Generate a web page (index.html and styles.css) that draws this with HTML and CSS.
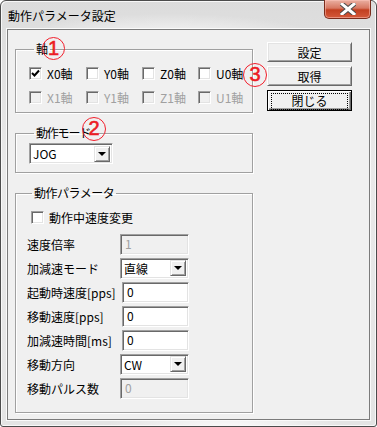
FILE: index.html
```html
<!DOCTYPE html>
<html lang="ja">
<head>
  <meta charset="UTF-8">
  <title>動作パラメータ設定</title>
  <link rel="stylesheet" href="styles.css">
</head>
<body>
  <div class="window">
    <div class="titlebar">
      <span class="title">動作パラメータ設定</span>
      <span class="close-btn">
        <svg width="16" height="12" viewBox="0 0 16 12">
          <path d="M2 1 L14 11 M14 1 L2 11" stroke="#4a4a4a" stroke-width="5" stroke-linecap="square"/>
          <path d="M2 1 L14 11 M14 1 L2 11" stroke="#ffffff" stroke-width="3" stroke-linecap="square"/>
        </svg>
      </span>
    </div>

    <div class="client">
      <div class="left">
        <!-- 軸 -->
        <fieldset class="group group-axis">
          <legend>軸</legend>
          <div class="axis-row">
            <label class="check"><span class="box"><svg width="9" height="9" viewBox="0 0 9 9"><path d="M1 4 L3.5 6.5 L8 1.5" stroke="#000" stroke-width="2" fill="none"/></svg></span>X0軸</label>
            <label class="check"><span class="box"></span>Y0軸</label>
            <label class="check"><span class="box"></span>Z0軸</label>
            <label class="check"><span class="box"></span>U0軸</label>
          </div>
          <div class="axis-row disabled">
            <label class="check"><span class="box"></span>X1軸</label>
            <label class="check"><span class="box"></span>Y1軸</label>
            <label class="check"><span class="box"></span>Z1軸</label>
            <label class="check"><span class="box"></span>U1軸</label>
          </div>
        </fieldset>

        <!-- 動作モード -->
        <fieldset class="group group-mode">
          <legend>動作モード</legend>
          <div class="combo combo-mode">
            <span class="combo-text">JOG</span>
            <span class="combo-btn"></span>
          </div>
        </fieldset>

        <!-- 動作パラメータ -->
        <fieldset class="group group-param">
          <legend>動作パラメータ</legend>
          <label class="check check-speed"><span class="box"></span>動作中速度変更</label>
          <div class="param-grid">
            <span>速度倍率</span>
            <div class="edit disabled">1</div>

            <span>加減速モード</span>
            <div class="combo">
              <span class="combo-text">直線</span>
              <span class="combo-btn"></span>
            </div>

            <span>起動時速度[pps]</span>
            <div class="edit edit-narrow">0</div>

            <span>移動速度[pps]</span>
            <div class="edit edit-narrow">0</div>

            <span>加減速時間[ms]</span>
            <div class="edit edit-narrow">0</div>

            <span>移動方向</span>
            <div class="combo">
              <span class="combo-text">CW</span>
              <span class="combo-btn"></span>
            </div>

            <span>移動パルス数</span>
            <div class="edit disabled">0</div>
          </div>
        </fieldset>
      </div>

      <div class="buttons">
        <button class="btn">設定</button>
        <button class="btn">取得</button>
        <button class="btn btn-default"><span class="focus">閉じる</span></button>
      </div>
    </div>

    <!-- annotations -->
    <span class="mark mark-1">1</span>
    <span class="mark mark-2">2</span>
    <span class="mark mark-3">3</span>
  </div>
</body>
</html>
```

FILE: styles.css
```css
body {
  margin: 0;
  background: #ffffff;
  font-family: "Noto Sans CJK JP", "Liberation Sans", sans-serif;
  font-size: 12px;
  color: #000000;
}

.window {
  position: relative;
  box-sizing: border-box;
  width: 377px;
  height: 427px;
  border: 1px solid #4c4c4c;
  border-radius: 6px 6px 3px 3px;
  padding: 0 6px 6px;
  background:
    radial-gradient(ellipse 120px 18px at 60% 100%, rgba(255, 255, 255, 0.8), rgba(255, 255, 255, 0)),
    radial-gradient(ellipse 160px 30px at 45% 10%, rgba(255, 255, 255, 0.9), rgba(255, 255, 255, 0)),
    linear-gradient(#dcdcdc, #e9e9e9 40%, #e4e4e4);
  box-shadow: inset 1px 1px #f8f8f8, inset -1px -1px #f8f8f8;
}

.titlebar {
  height: 28px;
  display: flex;
  align-items: flex-start;
  justify-content: space-between;
  margin-right: -1px;
}

.title {
  padding: 7px 0 0 1px;
  font-size: 12px;
  line-height: 16px;
}

.close-btn {
  box-sizing: border-box;
  width: 47px;
  height: 19px;
  margin-top: -1px;
  display: flex;
  align-items: center;
  justify-content: center;
  border: 1px solid #7a2c1c;
  border-top: none;
  border-radius: 0 0 5px 5px;
  background: linear-gradient(#eab0a2, #d77862 45%, #c23f20 55%, #d4593a);
  box-shadow: inset 0 0 0 1px rgba(255, 200, 190, 0.5);
}

.client {
  box-sizing: border-box;
  height: 391px;
  display: flex;
  background: #f0f0f0;
  border: 1px solid #7b7b7b;
  box-shadow: 0 0 0 1px #fafafa;
}

.left {
  margin-left: 7px;
  width: 238px;
}

.group {
  margin: 13px 0 0;
  padding: 0;
  border: 1px solid #a0a0a0;
  box-shadow: inset 1px 1px #ffffff, 1px 1px #ffffff;
  min-width: 0;
}

.group legend {
  margin-left: 5px;
  padding: 0 2px;
  line-height: 14px;
}

.group-axis {
  margin-top: 12px;
  padding: 5px 0 3px 13px;
}

.axis-row {
  display: grid;
  grid-template-columns: 57px 56px 56px auto;
  height: 24px;
  align-items: center;
}

.axis-row.disabled {
  color: #a0a0a0;
}

.check {
  display: flex;
  align-items: center;
  gap: 5px;
  white-space: nowrap;
}

.box {
  box-sizing: border-box;
  width: 13px;
  height: 13px;
  display: flex;
  align-items: center;
  justify-content: center;
  background: #ffffff;
  border: 1px solid;
  border-color: #a0a0a0 #ffffff #ffffff #a0a0a0;
  box-shadow: inset 1px 1px #696969, inset -1px -1px #e3e3e3;
}

.disabled .box {
  background: #f0f0f0;
}

.group-mode {
  padding: 3px 0 8px 13px;
}

.group-mode legend {
  letter-spacing: -1.2px;
}

.combo {
  box-sizing: border-box;
  width: 69px;
  height: 21px;
  display: flex;
  align-items: center;
  justify-content: space-between;
  padding: 2px;
  background: #ffffff;
  border: 1px solid;
  border-color: #a0a0a0 #ffffff #ffffff #a0a0a0;
  box-shadow: inset 1px 1px #696969, inset -1px -1px #e3e3e3;
}

.combo-mode {
  width: 84px;
}

.combo-text {
  padding-left: 1px;
  line-height: 15px;
}

.combo-btn {
  box-sizing: border-box;
  width: 16px;
  height: 16px;
  display: flex;
  align-items: center;
  justify-content: center;
  background: #f0f0f0;
  border: 1px solid;
  border-color: #e3e3e3 #696969 #696969 #e3e3e3;
  box-shadow: inset 1px 1px #ffffff, inset -1px -1px #a0a0a0;
}

.combo-btn::after {
  content: "";
  border-left: 4px solid transparent;
  border-right: 4px solid transparent;
  border-top: 4px solid #000000;
}

.group-param {
  padding: 5px 0 12px 11px;
}

.group-param legend {
  letter-spacing: -0.5px;
}

.check-speed {
  height: 24px;
  margin-left: 4px;
}

.param-grid {
  margin-top: 3px;
  display: grid;
  grid-template-columns: 93px auto;
  grid-auto-rows: 24px;
  align-items: center;
}

.param-grid span {
  white-space: nowrap;
}

.edit {
  box-sizing: border-box;
  width: 69px;
  height: 21px;
  padding: 2px 4px;
  line-height: 14px;
  background: #ffffff;
  border: 1px solid;
  border-color: #a0a0a0 #ffffff #ffffff #a0a0a0;
  box-shadow: inset 1px 1px #696969, inset -1px -1px #e3e3e3;
}

.edit-narrow {
  width: 67px;
  margin-left: 2px;
}

.edit.disabled {
  background: #f0f0f0;
  color: #a0a0a0;
}

.buttons {
  margin: 12px 0 0 14px;
  display: flex;
  flex-direction: column;
  gap: 4px;
}

.btn {
  box-sizing: border-box;
  width: 85px;
  height: 20px;
  padding: 0;
  font-family: inherit;
  font-size: 12px;
  color: #000000;
  background: #f0f0f0;
  border: 1px solid;
  border-color: #ffffff #696969 #696969 #ffffff;
  box-shadow: inset 1px 1px #e3e3e3, inset -1px -1px #a0a0a0;
}

.btn-default {
  height: 21px;
  padding: 2px 3px;
  border: 1px solid #000000;
  box-shadow: inset 1px 1px #ffffff, inset -1px -1px #696969, inset -2px -2px #a0a0a0;
}

.focus {
  display: block;
  height: 15px;
  line-height: 13px;
  border: 1px dotted #000000;
}

.mark {
  position: absolute;
  box-sizing: border-box;
  width: 23px;
  height: 23px;
  border: 1.3px solid #f21f2c;
  border-radius: 50%;
  color: #ec1c24;
  font-family: "Liberation Sans", sans-serif;
  font-size: 20px;
  line-height: 21px;
  text-align: center;
  -webkit-text-stroke: 0.6px #ec1c24;
}

.mark-1 {
  left: 41px;
  top: 36px;
}

.mark-2 {
  left: 81px;
  top: 116px;
  width: 24px;
  height: 24px;
}

.mark-3 {
  left: 242px;
  top: 62px;
  width: 24px;
  height: 24px;
}
```
